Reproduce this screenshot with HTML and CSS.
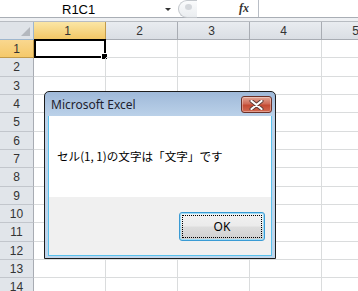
FILE: index.html
```html
<!DOCTYPE html>
<html>
<head>
<meta charset="utf-8">
<link rel="stylesheet" href="styles.css">
</head>
<body>
<div class="app">
  <div class="fbar">
    <div class="namebox"><span class="ref">R1C1</span><span class="arrow"></span></div>
    <div class="fxbox">
      <span class="knob"><span class="dot"></span></span>
      <span class="fx">fx</span>
    </div>
    <div class="input"></div>
  </div>
  <div class="band"></div>
  <div class="sheet">
    <div class="corner"><span class="tri"></span></div>
    <div class="ch sel">1</div>
    <div class="ch">2</div>
    <div class="ch">3</div>
    <div class="ch">4</div>
    <div class="ch">5</div>

    <div class="rh sel">1</div><div class="c active"><span class="handle"></span></div><div class="c"></div><div class="c"></div><div class="c"></div><div class="c"></div>
    <div class="rh">2</div><div class="c"></div><div class="c"></div><div class="c"></div><div class="c"></div><div class="c"></div>
    <div class="rh">3</div><div class="c"></div><div class="c"></div><div class="c"></div><div class="c"></div><div class="c"></div>
    <div class="rh">4</div><div class="c"></div><div class="c"></div><div class="c"></div><div class="c"></div><div class="c"></div>
    <div class="rh">5</div><div class="c"></div><div class="c"></div><div class="c"></div><div class="c"></div><div class="c"></div>
    <div class="rh">6</div><div class="c"></div><div class="c"></div><div class="c"></div><div class="c"></div><div class="c"></div>
    <div class="rh">7</div><div class="c"></div><div class="c"></div><div class="c"></div><div class="c"></div><div class="c"></div>
    <div class="rh">8</div><div class="c"></div><div class="c"></div><div class="c"></div><div class="c"></div><div class="c"></div>
    <div class="rh">9</div><div class="c"></div><div class="c"></div><div class="c"></div><div class="c"></div><div class="c"></div>
    <div class="rh">10</div><div class="c"></div><div class="c"></div><div class="c"></div><div class="c"></div><div class="c"></div>
    <div class="rh">11</div><div class="c"></div><div class="c"></div><div class="c"></div><div class="c"></div><div class="c"></div>
    <div class="rh">12</div><div class="c"></div><div class="c"></div><div class="c"></div><div class="c"></div><div class="c"></div>
    <div class="rh">13</div><div class="c"></div><div class="c"></div><div class="c"></div><div class="c"></div><div class="c"></div>
    <div class="rh">14</div><div class="c"></div><div class="c"></div><div class="c"></div><div class="c"></div><div class="c"></div>
  </div>

  <div class="dialog">
    <div class="titlebar">
      <span class="title">Microsoft Excel</span>
      <span class="close">
        <svg width="15" height="10" viewBox="0 0 15 10">
          <path d="M2.5 1 L12.5 9 M12.5 1 L2.5 9" stroke="#5a3a36" stroke-width="4" stroke-linecap="round"/>
          <path d="M2.5 1 L12.5 9 M12.5 1 L2.5 9" stroke="#ffffff" stroke-width="2.2" stroke-linecap="round"/>
        </svg>
      </span>
    </div>
    <div class="body">
      <div class="msg">セル(1, 1)の文字は「文字」です</div>
      <div class="foot"><button class="ok">OK</button></div>
    </div>
  </div>
</div>
</body>
</html>
```

FILE: styles.css
```css
html, body {
  margin: 0;
  padding: 0;
  background: #ffffff;
}
.app {
  width: 358px;
  height: 291px;
  overflow: hidden;
  position: relative;
  font-family: "Liberation Sans", Arial, sans-serif;
}
.fbar {
  height: 17px;
  display: flex;
  background: #ffffff;
  border-bottom: 1px solid #a9aeb5;
}
.namebox {
  width: 176px;
  flex: 0 0 176px;
  display: flex;
  align-items: center;
  position: relative;
}
.ref {
  flex: 1;
  text-align: left;
  font-size: 13px;
  color: #000;
  padding-left: 62px;
  padding-top: 2px;
}
.arrow {
  width: 0;
  height: 0;
  border-left: 3px solid transparent;
  border-right: 3px solid transparent;
  border-top: 3px solid #333;
  margin-right: 5px;
  margin-top: 2px;
}
.fxbox {
  width: 82px;
  flex: 0 0 82px;
  display: flex;
  align-items: center;
  border-right: 1px solid #b9bec6;
  position: relative;
}
.knob {
  width: 18px;
  height: 16px;
  margin-left: 2px;
  border: 1px solid #c3c7cc;
  border-right: none;
  border-radius: 9px 0 0 9px;
  background: linear-gradient(#fafbfc, #eaedf0);
  position: relative;
}
.dot {
  position: absolute;
  left: 6px;
  top: 3px;
  width: 7px;
  height: 6px;
  border-radius: 50%;
  background: #d4d7db;
}
.fx {
  margin-left: auto;
  margin-right: 9px;
  font-family: "Liberation Serif", serif;
  font-style: italic;
  font-weight: bold;
  font-size: 12px;
  color: #333;
}
.input {
  flex: 1;
}
.band {
  height: 3px;
  background: #eef0f3;
  border-bottom: 1px solid #b8bcc2;
}
.sheet {
  display: grid;
  grid-template-columns: 34px repeat(5, 72px);
  grid-template-rows: 18px repeat(14, 18.33px);
}
.corner {
  background: #dfe3e8;
  border-right: 1px solid #9eb6ce;
  border-bottom: 1px solid #9eb6ce;
  position: relative;
  box-sizing: border-box;
}
.tri {
  position: absolute;
  right: 3px;
  bottom: 3px;
  width: 0;
  height: 0;
  border-left: 9px solid transparent;
  border-bottom: 9px solid #b4b8be;
}
.ch {
  background: linear-gradient(#e9ecf0, #dadee4);
  border-right: 1px solid #a8acb3;
  border-bottom: 1px solid #a8acb3;
  box-sizing: border-box;
  text-align: center;
  font-size: 12px;
  line-height: 18px;
  color: #333;
  padding-right: 4px;
}
.ch.sel {
  background: linear-gradient(#fbe6a6, #f3c766);
  border-right-color: #c29b4a;
  border-bottom-color: #c29b4a;
}
.rh {
  background: #e1e5ea;
  border-right: 1px solid #a8acb3;
  border-bottom: 1px solid #c2c6cc;
  box-sizing: border-box;
  text-align: center;
  font-size: 12px;
  line-height: 18px;
  color: #333;
}
.rh.sel {
  background: linear-gradient(#f9d78f, #f5c96a);
  border-right-color: #c29b4a;
  border-bottom-color: #c29b4a;
}
.c {
  border-right: 1px solid #dadcdd;
  border-bottom: 1px solid #dadcdd;
  box-sizing: border-box;
  position: relative;
}
.c.active {
  border: 2px solid #000;
  margin: -1px 0 0 0;
}
.handle {
  position: absolute;
  right: -4px;
  bottom: -4px;
  width: 5px;
  height: 5px;
  background: #000;
  border: 1px solid #fff;
}
.dialog {
  position: absolute;
  left: 44px;
  top: 91px;
  width: 224px;
  height: 164px;
  border: 1px solid #1c1c1c;
  border-radius: 5px 5px 0 0;
  background: linear-gradient(#9fb9d9, #bdd3ea 26px, #c0d6ec);
  padding: 0 3px 2px 3px;
  box-sizing: content-box;
  display: flex;
  flex-direction: column;
  font-family: "Noto Sans", "Noto Sans CJK JP", sans-serif;
}
.titlebar {
  height: 24px;
  display: flex;
  align-items: center;
  position: relative;
}
.title {
  font-size: 12px;
  color: #1e1e2e;
  margin-left: 3px;
  margin-top: 1px;
}
.close {
  margin-left: auto;
  margin-right: 0;
  width: 29px;
  height: 15px;
  margin-top: 1px;
  border: 1px solid #6a3028;
  border-radius: 3px;
  background: linear-gradient(#e3a595, #cf6b57 45%, #c44a33 55%, #d26a52);
  display: flex;
  align-items: center;
  justify-content: center;
  box-shadow: inset 0 0 0 1px rgba(255,255,255,0.35);
}
.body {
  flex: 1;
  display: flex;
  flex-direction: column;
  border: 1px solid #59c1ec;
  border-top: none;
  background: #f0f0f0;
}
.msg {
  height: 81px;
  background: #ffffff;
  padding: 31px 0 0 8px;
  box-sizing: border-box;
  font-family: "Noto Sans CJK JP", sans-serif;
  font-size: 11.6px;
  line-height: 18px;
  color: #000;
}
.foot {
  flex: 1;
  display: flex;
  justify-content: flex-end;
  align-items: flex-start;
  padding: 15px 6px 0 0;
}
.ok {
  width: 86px;
  height: 29px;
  border: 1px solid #3a9bd4;
  border-radius: 3px;
  background: linear-gradient(#f2f2f2, #ebebeb 48%, #dddddd 52%, #cfcfcf);
  outline: 1px dotted #000;
  outline-offset: -4px;
  font-family: "Noto Sans", sans-serif;
  font-size: 12px;
  color: #000;
  padding: 0;
  box-shadow: inset 0 0 0 1px #9fdcf6;
}
```
